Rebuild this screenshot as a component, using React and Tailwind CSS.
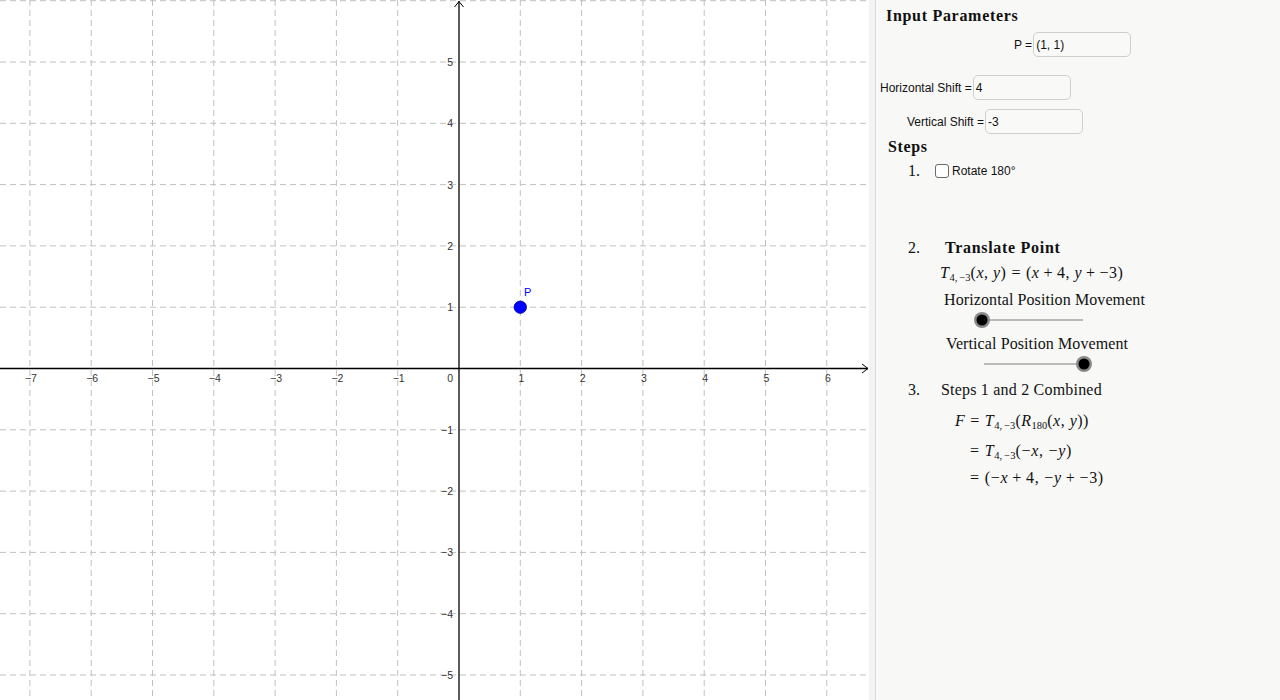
import React from "react";

const UNIT = 61.3;
const OX = 459;
const OY = 368.5;

const serif = "font-['Liberation_Serif','Times_New_Roman',serif]";
const sans = "font-['Liberation_Sans',Arial,sans-serif]";

function Graph() {
  const xs = [];
  for (let k = -7; k <= 6; k++) xs.push(k);
  const ys = [];
  for (let k = -5; k <= 6; k++) ys.push(k);
  const label = (n) => (n < 0 ? `\u2212${-n}` : `${n}`);

  return (
    <svg width="869" height="700" className="block">
      <rect width="869" height="700" fill="#ffffff" />
      {xs.map((k) =>
        k === 0 ? null : (
          <line
            key={`vx${k}`}
            x1={OX + k * UNIT}
            x2={OX + k * UNIT}
            y1="0"
            y2="700"
            stroke="#c0c0c0"
            strokeWidth="1"
            strokeDasharray="6 4"
          />
        )
      )}
      {ys.map((k) =>
        k === 0 ? null : (
          <line
            key={`hy${k}`}
            x1="0"
            x2="869"
            y1={OY - k * UNIT}
            y2={OY - k * UNIT}
            stroke="#c0c0c0"
            strokeWidth="1"
            strokeDasharray="6 4"
          />
        )
      )}

      {/* axes */}
      <line x1="0" x2="868" y1={OY} y2={OY} stroke="#000" strokeWidth="1.3" />
      <line x1={OX} x2={OX} y1="1" y2="700" stroke="#000" strokeWidth="1.3" />
      <polyline points={`862,${OY - 4.5} 868,${OY} 862,${OY + 4.5}`} fill="none" stroke="#000" strokeWidth="1" />
      <polyline points={`${OX - 4.5},7 ${OX},1.5 ${OX + 4.5},7`} fill="none" stroke="#000" strokeWidth="1" />

      <g fontFamily="'Liberation Sans', Arial, sans-serif" fontSize="10.5" fill="#333">
        {xs.map((k) =>
          k === 0 ? null : (
            <text key={`lx${k}`} x={OX + k * UNIT + 1} y="382" textAnchor="middle">
              {label(k)}
            </text>
          )
        )}
        {ys.map((k) =>
          k === 0 || k === 6 ? null : (
            <text key={`ly${k}`} x="453" y={OY - k * UNIT + 4} textAnchor="end">
              {label(k)}
            </text>
          )
        )}
        <text x="453" y="382" textAnchor="end">0</text>
      </g>

      {/* point P */}
      <circle cx={OX + UNIT} cy={OY - UNIT} r="6.2" fill="#0000ff" stroke="#00008a" strokeWidth="0.8" />
      <text x="524" y="296" fontFamily="'Liberation Sans', Arial, sans-serif" fontSize="11" fill="#0000ff">
        P
      </text>
    </svg>
  );
}

function Field({ label, value, pad, width }) {
  return (
    <div className={`flex items-center h-[25px] ${pad}`}>
      <span className={`${sans} text-[12px] text-[#111] mr-[1px]`}>{label}</span>
      <div
        className={`h-[25px] ${width} rounded-[5px] border border-[#cfcfcf] bg-[#f9f9f8] flex items-center pl-[2px] ${sans} text-[12px] text-[#111]`}
      >
        {value}
      </div>
    </div>
  );
}

function Slider({ pad, knob }) {
  return (
    <svg width="130" height="16" className={`block overflow-visible ${pad}`}>
      <line x1="10" x2="111" y1="8" y2="8" stroke="#7a7a7a" strokeWidth="1" />
      <circle cx={knob} cy="8" r="8" fill="#8a8a8a" />
      <circle cx={knob} cy="8" r="5.5" fill="#000" />
    </svg>
  );
}

const I = ({ children }) => <i className="italic">{children}</i>;
const Sub = ({ children }) => <sub className="text-[10.5px] not-italic tracking-normal">{children}</sub>;
const Rel = ({ children }) => <span className="mx-[5px]">{children}</span>;
const Bin = ({ children }) => <span className="mx-[4px]">{children}</span>;
const T = () => (
  <>
    <I>T</I>
    <Sub>4,&thinsp;−3</Sub>
  </>
);

export default function App() {
  return (
    <div className="w-[1280px] h-[700px] flex overflow-hidden bg-white">
      <div className="w-[869px] h-full shrink-0 border-r border-[#e2e2e2]">
        <Graph />
      </div>
      <div className="w-[6px] h-full shrink-0 bg-[#f3f3f3]" />
      <div className={`flex-1 h-full border-l border-[#dcdcdc] bg-[#f8f8f7] flex flex-col text-[#111] ${serif}`}>
        <div className="h-[30px] pt-[2px] flex items-center pl-[10px] text-[16px] font-bold tracking-[0.7px]">
          Input Parameters
        </div>

        <div className="mt-[2px]">
          <Field label="P =" value="(1, 1)" pad="pl-[138px]" width="w-[98px]" />
        </div>
        <div className="mt-[18px]">
          <Field label="Horizontal Shift =" value="4" pad="pl-[4px]" width="w-[98px]" />
        </div>
        <div className="mt-[9px]">
          <Field label="Vertical Shift =" value="-3" pad="pl-[31px]" width="w-[98px]" />
        </div>

        <div className="h-[24px] pt-[2px] flex items-center pl-[12px] text-[16px] font-bold tracking-[0.6px]">Steps</div>
        <div className="h-[24px] pt-[2px] flex items-center pl-[32px] text-[16px]">
          <span className="w-[27px]">1.</span>
          <span className="w-[14px] h-[14px] rounded-[3px] border-[1.5px] border-[#6b6b6b] bg-white mr-[3px]" />
          <span className={`${sans} text-[12px]`}>Rotate 180°</span>
        </div>

        <div className="mt-[53px] h-[24px] pt-[2px] flex items-center pl-[32px] text-[16px]">
          <span className="w-[37px]">2.</span>
          <span className="font-bold tracking-[0.7px]">Translate Point</span>
        </div>
        <div className="h-[26px] pt-[2px] flex items-center pl-[64px] text-[16px] tracking-[0.5px]">
          <span>
            <T />(<I>x</I>, <I>y</I>)<Rel>=</Rel>(<I>x</I>
            <Bin>+</Bin>4, <I>y</I>
            <Bin>+</Bin>−3)
          </span>
        </div>
        <div className="h-[28px] pt-[2px] flex items-center pl-[68px] text-[16px] tracking-[0.1px]">
          Horizontal Position Movement
        </div>
        <div className="h-[14px] flex items-center">
          <Slider pad="ml-[96px]" knob={10} />
        </div>
        <div className="h-[32px] pt-[2px] flex items-center pl-[70px] text-[16px] tracking-[0.1px]">
          Vertical Position Movement
        </div>
        <div className="h-[10px] flex items-center">
          <Slider pad="ml-[98px]" knob={110} />
        </div>

        <div className="h-[40px] pt-[2px] flex items-center pl-[32px] text-[16px]">
          <span className="w-[33px]">3.</span>
          <span className="tracking-[0.2px]">Steps 1 and 2 Combined</span>
        </div>
        <div className="h-[22px] pt-[2px] flex items-center pl-[79px] text-[16px] tracking-[0.5px]">
          <span>
            <I>F</I>
            <Rel>=</Rel>
            <T />(<I>R</I>
            <Sub>180</Sub>(<I>x</I>, <I>y</I>))
          </span>
        </div>
        <div className="h-[38px] pt-[2px] flex items-center pl-[94px] text-[16px] tracking-[0.7px]">
          <span>
            =<span className="ml-[5px]" />
            <T />(−<I>x</I>, −<I>y</I>)
          </span>
        </div>
        <div className="h-[16px] pt-[2px] flex items-center pl-[94px] text-[16px] tracking-[0.7px]">
          <span>
            =<span className="ml-[5px]" />(−<I>x</I>
            <Bin>+</Bin>4, −<I>y</I>
            <Bin>+</Bin>−3)
          </span>
        </div>
      </div>
    </div>
  );
}
